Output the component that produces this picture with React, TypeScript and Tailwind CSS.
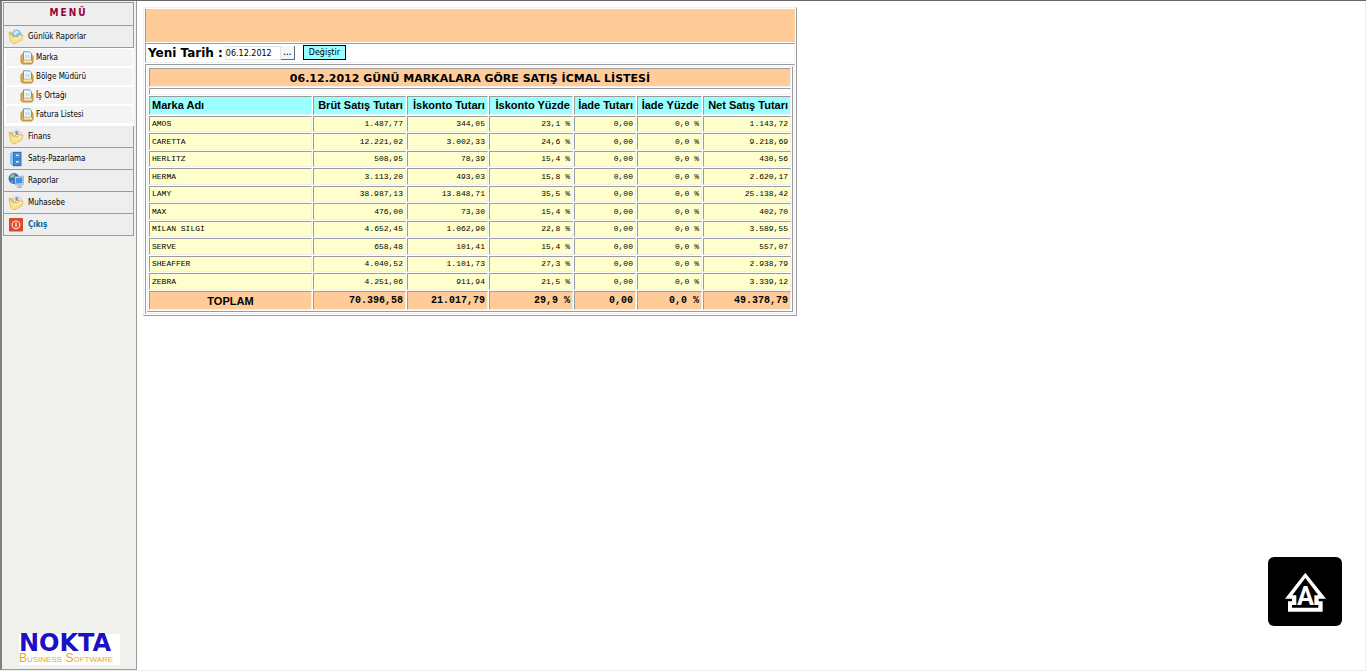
import { useState } from 'react';
import type { ReactNode } from 'react';

type Row = [string, string, string, string, string, string, string];

const COLUMNS = ['Marka Adı', 'Brüt Satış Tutarı', 'İskonto Tutarı', 'İskonto Yüzde', 'İade Tutarı', 'İade Yüzde', 'Net Satış Tutarı'];

const ROWS: Row[] = [
  ['AMOS', '1.487,77', '344,05', '23,1 %', '0,00', '0,0 %', '1.143,72'],
  ['CARETTA', '12.221,02', '3.002,33', '24,6 %', '0,00', '0,0 %', '9.218,69'],
  ['HERLITZ', '508,95', '78,39', '15,4 %', '0,00', '0,0 %', '430,56'],
  ['HERMA', '3.113,20', '493,03', '15,8 %', '0,00', '0,0 %', '2.620,17'],
  ['LAMY', '38.987,13', '13.848,71', '35,5 %', '0,00', '0,0 %', '25.138,42'],
  ['MAX', '476,00', '73,30', '15,4 %', '0,00', '0,0 %', '402,70'],
  ['MİLAN SİLGİ', '4.652,45', '1.062,90', '22,8 %', '0,00', '0,0 %', '3.589,55'],
  ['SERVE', '658,48', '101,41', '15,4 %', '0,00', '0,0 %', '557,07'],
  ['SHEAFFER', '4.040,52', '1.101,73', '27,3 %', '0,00', '0,0 %', '2.938,79'],
  ['ZEBRA', '4.251,06', '911,94', '21,5 %', '0,00', '0,0 %', '3.339,12'],
];

const TOTALS: Row = ['TOPLAM', '70.396,58', '21.017,79', '29,9 %', '0,00', '0,0 %', '49.378,79'];

const inset = 'border border-t-[#9b9b9b] border-l-[#9b9b9b] border-r-[#f0f0f0] border-b-[#f0f0f0]';
const outset = 'border border-t-[#f0f0f0] border-l-[#f0f0f0] border-r-[#9b9b9b] border-b-[#9b9b9b]';

const FolderIcon = ({ globe = false }: { globe?: boolean }) => (
  <svg viewBox="0 0 16 16" className="size-4 shrink-0" aria-hidden="true">
    <path d="M1 3.5 2.5 2.5 5 4 12 2.5l2.5 3L7 15 3.5 13z" fill="#e8bd55" />
    {globe ? (
      <>
        <circle cx="8.5" cy="5.2" r="4.6" fill="#86c0e8" />
        <path d="M5.5 4q2-3 4.5-2l.5 2-2.5 1-.5 2zM10.5 6l2-.5-.5 2.5z" fill="#d4eef9" />
      </>
    ) : (
      <>
        <path d="M5 3 9.5.8 14 5.5 11 8 6 7.5z" fill="#edf3f8" stroke="#a9b8c4" strokeWidth=".5" />
        <circle cx="8.7" cy="3.6" r="1.5" fill="#5f9bd2" />
        <path d="M7 6.6q2.5-2.4 4.3-.8" stroke="#d38c5a" strokeWidth="1.1" fill="none" />
      </>
    )}
    <path d="M1 3.5 5 7.5 9 8.3 11 6.5 15 6 13.8 11 6 15 2.6 12.5z" fill="#fbe28a" stroke="#d6aa4d" strokeWidth=".6" />
    <path d="M5.4 9 9.3 9.5 11.4 7.8 14 7.3" fill="none" stroke="#fff5c4" strokeWidth=".9" />
  </svg>
);

const PrintIcon = () => (
  <svg viewBox="0 0 14 14" className="size-3.5 shrink-0" aria-hidden="true">
    <path d="M1 4.5 2.8 3H11l2 2.5v6L11.5 13H2.5L1 11.5z" fill="#e2b44e" stroke="#a57a2a" strokeWidth=".8" />
    <path d="M3.5.8h6l2 2V9.5h-8z" fill="#f0f8ff" stroke="#5f8dbd" strokeWidth=".9" />
    <path d="M5 3.8h5v3.4H5z" fill="#c8e4f8" />
    <path d="M3.4 9h9v3h-9z" fill="#f8e4b0" stroke="#b78e40" strokeWidth=".6" />
  </svg>
);

const CabinetIcon = () => (
  <svg viewBox="0 0 16 16" className="size-4 shrink-0" aria-hidden="true">
    <path d="M2 2 5.5.5v15L2 13z" fill="#8cc5f2" />
    <path d="M5 .8h8.5v14.4H5z" fill="#2b74c6" />
    <path d="M6.3 2h6v5h-6zM6.3 8.5h6v5h-6z" fill="#5a9fe0" />
    <path d="M7.5 3h3.6v2.6H7.5zM7.5 9.5h3.6v2.6H7.5z" fill="#d8effc" stroke="#1c57a5" strokeWidth=".6" />
  </svg>
);

const NetworkIcon = () => (
  <svg viewBox="0 0 16 16" className="size-4 shrink-0" aria-hidden="true">
    <circle cx="6" cy="5.5" r="5.4" fill="#2a6fc9" />
    <path d="M2 3q3-3 5-1.5L6 4 3 5.5zM2.5 7.5l3 .5-1 2z" fill="#88cf7c" />
    <path d="M6.5 3.8 15.6 3v8.5L7.5 12z" fill="#dce6ef" stroke="#8295ab" strokeWidth=".6" />
    <path d="M7.6 5 14.5 4.3v6l-6.2.5z" fill="#4493e0" />
    <path d="M10 12h3l1.8 2.3q-3 1.6-6.4.4z" fill="#b3bfce" />
  </svg>
);

const ExitIcon = () => (
  <svg viewBox="0 0 16 16" className="size-4 shrink-0" aria-hidden="true">
    <rect x="1" y="1" width="14" height="13.5" rx="1" fill="#dc4a2c" />
    <circle cx="8" cy="7.8" r="3.8" fill="none" stroke="#ffe1d4" strokeWidth="1.2" />
    <path d="M8 5.6v4.2" stroke="#fff" strokeWidth="1.3" />
  </svg>
);

const MenuItem = ({ icon, label, accent = false }: { icon: ReactNode; label: string; accent?: boolean }) => (
  <a
    href="#"
    className={`flex h-[22px] items-center gap-1 border-r border-b border-[#9b9b9b] bg-[#eeeeee] pl-1 ${
      accent ? 'font-bold text-[#006699]' : ''
    }`}
  >
    {icon}
    {label}
  </a>
);

const SubItem = ({ label }: { label: string }) => (
  <a href="#" className="flex h-[19px] items-center gap-0.5 border-b-2 border-white bg-[#f4f4f4] pl-3.5">
    <PrintIcon />
    {label}
  </a>
);

const Sidebar = () => (
  <aside className="flex w-[137px] shrink-0 flex-col border-r border-b border-l-2 border-[#9b9b9b] border-l-[#808080] bg-[#f0f1ec] pt-px pr-0.5 pl-px">
    <nav className="border-t border-l border-[#9b9b9b] font-['DejaVu_Sans_Condensed','DejaVu_Sans',sans-serif] text-[8px] leading-3 text-black">
      <h2 className="flex h-[23px] items-center justify-center border-r border-b border-[#9b9b9b] bg-[#eeeeee] pb-0.5 text-[10px] font-bold tracking-[2px] text-[#990033]">
        MENÜ
      </h2>
      <MenuItem icon={<FolderIcon globe />} label="Günlük Raporlar" />
      <div className="border-y border-white bg-white pr-px pl-0.5">
        <SubItem label="Marka" />
        <SubItem label="Bölge Müdürü" />
        <SubItem label="İş Ortağı" />
        <SubItem label="Fatura Listesi" />
      </div>
      <MenuItem icon={<FolderIcon />} label="Finans" />
      <MenuItem icon={<CabinetIcon />} label="Satış-Pazarlama" />
      <MenuItem icon={<NetworkIcon />} label="Raporlar" />
      <MenuItem icon={<FolderIcon />} label="Muhasebe" />
      <MenuItem icon={<ExitIcon />} label="Çıkış" accent />
    </nav>
    <div className="mt-auto mb-1 ml-4 w-[101px] bg-white pt-px whitespace-nowrap">
      <div className="font-['DejaVu_Sans',sans-serif] text-2xl leading-4 font-bold text-[#1c0fc4]">NOKTA</div>
      <div className="font-['Liberation_Sans',sans-serif] text-[12px] leading-[14px] text-[#dfa92c] [font-variant:small-caps]">
        Business Software
      </div>
    </div>
  </aside>
);

const ReportTable = () => (
  <table
    className={`w-full table-fixed border-separate border-spacing-px font-['Liberation_Sans',sans-serif] text-[11px] leading-3 whitespace-nowrap ${outset}`}
  >
    <colgroup>
      <col />
      <col className="w-[93px]" />
      <col className="w-[81px]" />
      <col className="w-[84px]" />
      <col className="w-[62px]" />
      <col className="w-[65px]" />
      <col className="w-[88px]" />
    </colgroup>
    <thead>
      <tr>
        <th
          colSpan={7}
          className={`h-[19px] bg-[#ffcc99] px-0 pt-0.5 pb-0 text-center font-['DejaVu_Sans',sans-serif] text-[11px] ${inset}`}
        >
          06.12.2012 GÜNÜ MARKALARA GÖRE SATIŞ İCMAL LİSTESİ
        </th>
      </tr>
      <tr>
        <td colSpan={7} className={`h-[7px] p-0 ${inset}`} />
      </tr>
      <tr>
        {COLUMNS.map((c, i) => (
          <th key={c} scope="col" className={`h-[19px] bg-[#99ffff] px-0.5 pt-0 pb-0.5 ${i === 0 ? 'text-left' : 'text-right'} ${inset}`}>
            {c}
          </th>
        ))}
      </tr>
    </thead>
    <tbody className="font-['Liberation_Mono',monospace] text-[8px] leading-3">
      {ROWS.map((row, r) => (
        <tr key={row[0]} className={r % 2 ? 'h-[17px]' : 'h-4'}>
          {row.map((v, i) => (
            <td key={i} className={`bg-[#ffffcc] px-0.5 py-0 ${i === 0 ? 'text-left' : 'text-right'} ${inset}`}>
              {v}
            </td>
          ))}
        </tr>
      ))}
    </tbody>
    <tfoot>
      <tr className="h-[19px]">
        {TOTALS.map((v, i) => (
          <td
            key={i}
            className={`bg-[#ffcc99] px-0.5 py-0 font-bold ${
              i === 0 ? 'text-center' : "text-right font-['Liberation_Mono',monospace] text-[10px]"
            } ${inset}`}
          >
            {v}
          </td>
        ))}
      </tr>
    </tfoot>
  </table>
);

const App = () => {
  const [date, setDate] = useState('06.12.2012');

  return (
    <div className="flex min-h-screen border-t border-b border-t-[#666666] border-b-[#eeeeee] bg-white text-black">
      <Sidebar />
      <main className="grow border-r border-[#eeeeee] pt-1.5 pl-1.5">
        <div className={`flex w-[654px] flex-col gap-px p-px ${outset}`}>
          <div className="h-[33px] border-l border-[#9b9b9b] bg-[#ffcc99]" />
          <form className={`flex h-5 items-center pl-0.5 ${inset}`} onSubmit={(e) => e.preventDefault()}>
            <label htmlFor="tarih" className="font-['DejaVu_Sans',sans-serif] text-xs font-bold">
              Yeni Tarih :
            </label>
            <input
              id="tarih"
              value={date}
              onChange={(e) => setDate(e.target.value)}
              className="ml-0.5 h-3.5 w-14 border border-[#e3e3e3] font-['DejaVu_Sans',sans-serif] text-[8px]"
            />
            <button
              type="button"
              aria-label="Tarih seç"
              className="flex h-3.5 w-3.5 items-center justify-center border-r border-b border-[#666666] bg-[#f0f8ff] pb-1 text-[10px] leading-3"
            >
              ...
            </button>
            <button
              type="submit"
              className="mt-px ml-2 flex h-[15px] w-[43px] items-center justify-center self-start border border-black bg-[#99ffff] font-['DejaVu_Sans',sans-serif] text-[8px]"
            >
              Değiştir
            </button>
          </form>
          <div className={`p-px ${inset}`}>
            <ReportTable />
          </div>
        </div>
      </main>
      <button
        type="button"
        aria-label="Ana sayfa"
        className="fixed right-6 bottom-[45px] h-[69px] w-[74px] rounded-md bg-black"
      >
        <svg viewBox="39 36 222 207" className="size-full" aria-hidden="true">
          <path
            fillRule="evenodd"
            fill="#fff"
            d="M151 83 213 161H191V169H203V200H99V169H111V161H90zM151 99 112 151H124V180H111V188H190V180H178V151H190z"
          />
          <text
            x="151.5"
            y="180"
            textAnchor="middle"
            fill="#fff"
            className="font-['Roboto',sans-serif] text-[76px] font-bold"
          >
            A
          </text>
        </svg>
      </button>
    </div>
  );
};

export default App;
